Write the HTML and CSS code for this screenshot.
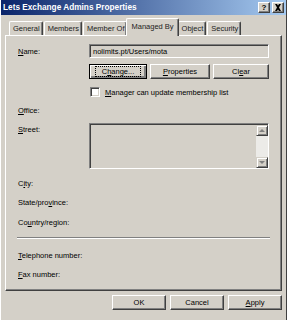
FILE: index.html
```html
<!DOCTYPE html>
<html lang="en">
<head>
  <meta charset="UTF-8" />
  <title>Lets Exchange Admins Properties</title>
  <link rel="stylesheet" href="styles.css">
</head>
<body>
  <div class="window">
    <div class="titlebar">
      <span class="title">Lets Exchange Admins Properties</span>
      <div class="caption-buttons">
        <span class="cap-btn help">?</span>
        <span class="cap-btn">
          <svg width="8" height="7" viewBox="0 0 8 7"><path d="M1 0h2l1 1.5L5 0h2L5 3.5 7 7H5L4 5.5 3 7H1l2-3.5z" fill="#000"/></svg>
        </span>
      </div>
    </div>

    <div class="tabs">
      <span class="tab">General</span>
      <span class="tab">Members</span>
      <span class="tab">Member Of</span>
      <span class="tab active">Managed By</span>
      <span class="tab">Object</span>
      <span class="tab">Security</span>
    </div>

    <div class="panel">
      <div class="row name-row">
        <span class="label"><u>N</u>ame:</span>
        <div class="textbox">nolimits.pt/Users/mota</div>
      </div>

      <div class="manage-buttons">
        <button class="btn focused"><span class="focus-ring">C<u>h</u>ange...</span></button>
        <button class="btn"><u>P</u>roperties</button>
        <button class="btn">Cl<u>e</u>ar</button>
      </div>

      <div class="check-row">
        <span class="checkbox"></span>
        <span><u>M</u>anager can update membership list</span>
      </div>

      <div class="row office-row">
        <span class="label"><u>O</u>ffice:</span>
      </div>

      <div class="row street-row">
        <span class="label"><u>S</u>treet:</span>
        <div class="textarea">
          <div class="scrollbar">
            <span class="arrow"><span class="tri up"></span></span>
            <span class="track"></span>
            <span class="arrow"><span class="tri down"></span></span>
          </div>
        </div>
      </div>

      <div class="row city-row">
        <span class="label">C<u>i</u>ty:</span>
      </div>
      <div class="row state-row">
        <span class="label">State/pro<u>v</u>ince:</span>
      </div>
      <div class="row country-row">
        <span class="label">Co<u>u</u>ntry/region:</span>
      </div>

      <div class="separator"></div>

      <div class="row phone-row">
        <span class="label"><u>T</u>elephone number:</span>
      </div>
      <div class="row fax-row">
        <span class="label"><u>F</u>ax number:</span>
      </div>
    </div>

    <div class="footer">
      <button class="btn">OK</button>
      <button class="btn">Cancel</button>
      <button class="btn"><u>A</u>pply</button>
    </div>
  </div>
</body>
</html>
```

FILE: styles.css
```css
* {
  box-sizing: border-box;
}

body {
  margin: 0;
  font-family: 'Liberation Sans', Arial, sans-serif;
  font-size: 7.5px;
  color: #000;
  background-color: #d4d0c8;
}

.window {
  width: 287px;
  height: 320px;
  background-color: #d4d0c8;
  border-left: 1px solid #fff;
  border-right: 1px solid #404040;
}

.titlebar {
  height: 15px;
  display: flex;
  align-items: center;
  justify-content: space-between;
  padding: 0 2px 0 2px;
  background: linear-gradient(to right, #0a246a, #a6caf0);
}

.title {
  color: #fff;
  font-weight: bold;
  font-size: 8.25px;
}

.caption-buttons {
  display: flex;
  gap: 2px;
}

.cap-btn {
  width: 12px;
  height: 11px;
  display: flex;
  align-items: center;
  justify-content: center;
  background-color: #d4d0c8;
  border: 1px solid;
  border-color: #fff #404040 #404040 #fff;
  box-shadow: inset -1px -1px #808080;
}

.cap-btn.help {
  font-weight: bold;
  font-size: 8px;
}

.tabs {
  height: 20px;
  display: flex;
  align-items: flex-end;
  padding-left: 8px;
}

.tab {
  height: 14px;
  padding: 0 2px 0 3px;
  display: flex;
  align-items: center;
  border: 1px solid;
  border-bottom: none;
  border-color: #fff #404040 #404040 #fff;
  border-radius: 2px 2px 0 0;
  box-shadow: inset -1px 0 #808080;
  margin-right: 1px;
  color: #222;
}

.tab.active {
  height: 18px;
  margin: 0 -1px -1px -2px;
  padding: 0 4px 3px;
  position: relative;
  z-index: 1;
  background-color: #d4d0c8;
}

.panel {
  height: 256px;
  margin: 0 4px;
  padding: 8px 11px 0 12px;
  border: 1px solid;
  border-color: #fff #404040 #404040 #fff;
  box-shadow: inset -1px -1px #808080;
}

.row {
  display: flex;
  align-items: center;
}

.label {
  width: 71px;
  flex-shrink: 0;
}

.textbox {
  width: 180px;
  height: 14px;
  padding-left: 3px;
  display: flex;
  align-items: center;
  border: 1px solid;
  border-color: #808080 #fff #fff #808080;
  box-shadow: inset 1px 1px #404040;
}

.manage-buttons {
  margin: 6px 0 0 71px;
  width: 180px;
  display: grid;
  grid-template-columns: 58px 60px 56px;
  gap: 3px;
}

.btn {
  height: 15px;
  padding: 0;
  font-family: inherit;
  font-size: 7.5px;
  color: #000;
  background-color: #d4d0c8;
  border: 1px solid;
  border-color: #fff #404040 #404040 #fff;
  box-shadow: inset -1px -1px #808080;
}

.btn.focused {
  border-color: #000;
  box-shadow: inset 1px 1px #fff, inset -2px -2px #808080;
}

.focus-ring {
  display: inline-block;
  padding: 0 6px;
  outline: 1px dotted #000;
}

.check-row {
  display: flex;
  align-items: center;
  gap: 5px;
  margin: 8px 0 0 72px;
  height: 10px;
}

.checkbox {
  width: 10px;
  height: 10px;
  background-color: #fff;
  border: 1px solid;
  border-color: #808080 #fff #fff #808080;
  box-shadow: inset 1px 1px #404040, inset -1px -1px #d4d0c8;
}

.office-row {
  height: 12px;
  margin-top: 7px;
}

.street-row {
  margin-top: 7px;
  align-items: flex-start;
}

.street-row .label {
  padding-top: 2px;
}

.textarea {
  width: 180px;
  height: 46px;
  display: flex;
  justify-content: flex-end;
  border: 1px solid;
  border-color: #808080 #fff #fff #808080;
  box-shadow: inset 1px 1px #404040;
}

.scrollbar {
  width: 12px;
  margin: 1px 0 0;
  display: flex;
  flex-direction: column;
}

.scrollbar .arrow {
  height: 11px;
  display: flex;
  align-items: center;
  justify-content: center;
  background-color: #d4d0c8;
  border: 1px solid;
  border-color: #d4d0c8 #404040 #404040 #d4d0c8;
  box-shadow: inset 1px 1px #fff, inset -1px -1px #808080;
}

.scrollbar .track {
  flex: 1;
  background-color: #ecebe8;
}

.tri {
  width: 0;
  height: 0;
  border-left: 3px solid transparent;
  border-right: 3px solid transparent;
}

.tri.up {
  border-bottom: 3px solid #808080;
}

.tri.down {
  border-top: 3px solid #808080;
}

.city-row {
  height: 12px;
  margin-top: 8px;
}

.state-row {
  height: 12px;
  margin-top: 7px;
}

.country-row {
  height: 12px;
  margin-top: 8px;
}

.separator {
  margin: 9px 0 0 -1px;
  height: 2px;
  border-top: 1px solid #808080;
  border-bottom: 1px solid #fff;
}

.phone-row {
  height: 12px;
  margin-top: 10px;
}

.fax-row {
  height: 12px;
  margin-top: 7px;
}

.footer {
  display: flex;
  justify-content: flex-end;
  gap: 4px;
  padding: 4px 4px 0 0;
}

.footer .btn {
  width: 54px;
}
```
